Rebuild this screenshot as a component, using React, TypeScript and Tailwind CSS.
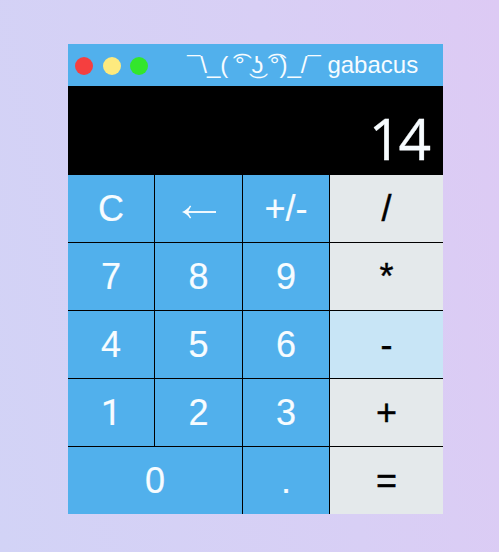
const keys: { label: string; wide?: boolean; op?: boolean; active?: boolean; font?: string }[] = [
  { label: 'C' }, { label: '←' }, { label: '+/-' }, { label: '/', op: true },
  { label: '7' }, { label: '8' }, { label: '9' }, { label: '*', op: true },
  { label: '4' }, { label: '5' }, { label: '6' }, { label: '-', op: true, active: true },
  { label: '1', font: 'font-[Roboto,sans-serif]' }, { label: '2' }, { label: '3' }, { label: '+', op: true },
  { label: '0', wide: true }, { label: '.' }, { label: '=', op: true },
];

function BackArrow() {
  return (
    <svg className="mt-[7px] h-[14px] w-[36px]" viewBox="0 0 36 14" fill="none" aria-hidden="true">
      <path d="M3 7H35" stroke="currentColor" strokeWidth="1.9" />
      <path d="M1 7C4.8 5.3 7.4 3.2 9 0.5L10.2 1.2C8.8 3.3 7.8 4.9 7.2 7C7.8 9.1 8.8 10.7 10.2 12.8L9 13.5C7.4 10.8 4.8 8.7 1 7Z" fill="currentColor" />
    </svg>
  );
}

function Key({ label, wide, op, active, font = '' }: (typeof keys)[number]) {
  const tone = active ? 'bg-[#c8e5f6] text-black' : op ? 'bg-[#e4e9eb] text-black' : 'bg-[#51b0ec] text-[#f7fcff]';
  const weight = op ? '[-webkit-text-stroke:0.4px_black]' : '[-webkit-text-stroke:0.2px_#f7fcff]';
  return (
    <button
      aria-label={label}
      className={`flex items-center justify-center text-4xl ${font} ${tone} ${weight} ${wide ? 'col-span-2' : ''}`}
    >
      {label === '←' ? <BackArrow /> : label}
    </button>
  );
}

export default function App() {
  return (
    <main className="h-[552px] w-[499px] bg-[linear-gradient(79deg,#d2d3f6_0%,#d8cff5_60%,#ddcaf4_100%)] pt-11 pl-[68px] font-['Liberation_Sans',Arial,sans-serif]">
      <section className="h-[470px] w-[375px] bg-black">
        <header className="flex h-[42px] items-center bg-[#51b0ec] pl-[7px]">
          <div className="flex items-center pt-px">
            <span className="mr-[10px] size-[18px] rounded-full bg-[#f53f3f]" />
            <span className="mr-[9px] size-[18px] rounded-full bg-[#fdea7e]" />
            <span className="size-[18px] rounded-full bg-[#33e62b]" />
          </div>
          <h1 className="ml-[39px] whitespace-pre text-2xl text-[#f7fcff]">¯\_( ͡° ͜ʖ ͡°)_/¯ gabacus</h1>
        </header>
        <div className="flex h-[89px] items-end justify-end pr-[15px] font-['Open_Sans',sans-serif] text-[57px] leading-[73px] tracking-[-3px] text-[#f7fcff] [-webkit-text-stroke:0.3px_#f7fcff]">
          14
        </div>
        <div className="grid grid-cols-[86px_87px_86px_113px] grid-rows-[repeat(5,67px)] gap-px">
          {keys.map((key) => (
            <Key key={key.label} {...key} />
          ))}
        </div>
      </section>
    </main>
  );
}
